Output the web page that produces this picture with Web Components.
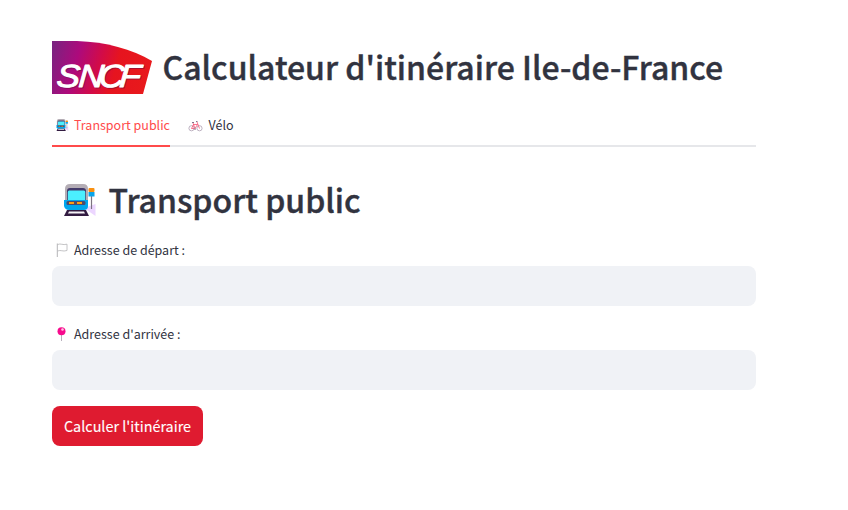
<!DOCTYPE html>
<html lang="fr">
<head>
<meta charset="utf-8">
<title>Calculateur d'itinéraire</title>
<style>
body{margin:0;background:#fff;color:#31333f;font-family:"Noto Sans CJK SC","Noto Sans",sans-serif}
</style>
</head>
<body>
<route-app></route-app>
<script>
const define=(name,html,setup)=>customElements.define(name,class extends HTMLElement{
  connectedCallback(){
    if(this.shadowRoot)return;
    const t=document.createElement('template');
    t.innerHTML=html;
    this.attachShadow({mode:'open'}).append(t.content.cloneNode(true));
    if(setup)setup(this,this.shadowRoot);
  }
});

define('sncf-logo',`
<style>:host{display:block;width:100px;height:53px}svg{display:block}
text{font:italic 400 32px "Liberation Sans",Arial,sans-serif;stroke-width:1px;stroke-linejoin:round}</style>
<svg width="100" height="53" viewBox="0 0 100 53">
<defs><linearGradient id="g" x1="0" y1="0.15" x2="1" y2="0.3"><stop offset="0" stop-color="#7b2280"/><stop offset=".27" stop-color="#ad0a7c"/><stop offset=".5" stop-color="#d20b48"/><stop offset=".68" stop-color="#e6141f"/><stop offset="1" stop-color="#e8191c"/></linearGradient></defs>
<path d="M0 0H25C54 1 80 8 100 20L91 53H0Z" fill="url(#g)"/>
<text transform="translate(4.700 46.500) skewX(-4) scale(1.100 1)" x="0 20 38.500 57" fill="#650d43" stroke="#650d43" opacity=".5" aria-hidden="true">SNCF</text>
<text transform="translate(4 45.500) skewX(-4) scale(1.100 1)" x="0 20 38.500 57" fill="#fff" stroke="#fff">SNCF</text>
</svg>`);

const icons={
train:`<svg viewBox="0 0 32 32">
<path d="M31.500 20V32L20 24Z" fill="#ecd6ff"/>
<path d="M1 5Q1 0 6 0H19Q24 0 24 5V17H1Z" fill="#b4adb5"/>
<path d="M3 7Q3 4 6 4H19Q22 4 22 7V17H3Z" fill="#433b6b"/><rect x="3.800" y="6.500" width="17.500" height="10.500" rx="1.500" fill="#4befff"/>
<path d="M0 16H24V22Q24 26 20 26H5Q1 26 0 22Z" fill="#00a6ed"/>
<rect x="2.500" y="17" width="19" height="4" rx="1.500" fill="#4b4b70"/><path d="M5 18h5v2H5zM13 18h5v2h-5z" fill="#ff9c12"/>
<path d="M3 26H22L25 32H0L2 28Z" fill="#321b41"/><path d="M5 27.500H20L21 29.500H4Z" fill="#f5f3f7"/>
<path d="M27.500 11V25" stroke="#7d7382" stroke-width="1.200"/><rect x="24.500" y="4" width="6" height="4" rx="1" fill="#f99010"/><rect x="24.500" y="8" width="6" height="4.500" fill="#0aa5ea"/></svg>`,
bike:`<svg viewBox="0 0 28 24" fill="none">
<circle cx="6" cy="16.500" r="5.200" stroke="#a999ae" stroke-width="1.500"/><circle cx="22" cy="16.500" r="5.200" stroke="#a999ae" stroke-width="1.500"/>
<path d="M9 6L13 17L6 17L10 9H18L13 17M17 4L22 17" stroke="#f5486b" stroke-width="1.500"/>
<path d="M7 5H11M15 3H18" stroke="#61516d" stroke-width="1.600"/><circle cx="13" cy="18" r="2" fill="#ae92a8"/></svg>`,
flag:`<svg viewBox="0 0 14 14" fill="none" stroke="#b5b5b7"><path d="M2.300 .5V14" stroke-width="1"/><path d="M2.500 1.500C6 0 7.500 2.500 12 1.200V7.500C7.500 9 6 6.500 2.500 8" stroke-width=".8"/></svg>`,
pin:`<svg viewBox="0 0 14 14"><path d="M6.500 7V14" stroke="#b9b0bd" stroke-width="1"/><circle cx="6.500" cy="4.200" r="4" fill="#f70a8d"/><circle cx="7.500" cy="2.500" r="1.300" fill="#ffc5e3"/></svg>`
};
define('route-icon',`<style>:host{display:block;flex:none}svg{display:block;width:100%;height:100%}</style>`,
(el,root)=>root.append(document.createRange().createContextualFragment(icons[el.getAttribute('name')])));

define('page-title',`
<style>:host{display:flex;align-items:center}
h1{margin:0;font-size:32px;line-height:43px;font-weight:500;white-space:nowrap;-webkit-text-stroke:.4px currentColor}</style>
<slot name="icon"></slot><h1><slot></slot></h1>`);

define('nav-tab',`
<style>:host{display:flex;align-items:center;height:40px;font-size:12.500px;line-height:20px;border-bottom:2px solid transparent;box-sizing:border-box;gap:5px;padding:0 0 2px 4px;white-space:nowrap}
:host([active]){color:#ff4b4b;border-color:#ff4b4b}</style>
<slot name="icon"></slot><span><slot></slot></span>`);

define('tab-list',`
<style>:host{display:flex;gap:14.500px;height:40px;box-shadow:inset 0 -2px #e6e7ea}</style><slot></slot>`);

define('text-field',`
<style>:host{display:block}
.label{display:flex;align-items:center;height:24px;font-size:12.500px;line-height:20px;gap:5px;padding-left:3px;margin-bottom:4px}
input{display:block;width:100%;height:40px;box-sizing:border-box;border:0;border-radius:8px;background:#f0f2f6;padding:0 12px;font:inherit;outline:0}</style>
<label><span class="label"><slot name="icon"></slot><span><slot></slot></span></span><input type="text"></label>`);

define('action-button',`
<style>:host{display:block;width:151px}
button{display:block;width:100%;height:40px;border:0;border-radius:8px;background:#df1b30;color:#fff;font:inherit;font-size:14.400px;line-height:40px;padding:0;white-space:nowrap;-webkit-text-stroke:.1px #fff}</style>
<button type="button"><span><slot></slot></span></button>`);

define('route-app',`
<style>
:host{display:block;width:704px;padding:41px 0 0 52px}
header{display:flex;height:53px;gap:10.500px}
header page-title{height:51px}
tab-list{margin-top:13px}
.section{margin-top:31px;height:43px}
.section route-icon{width:32px;height:32px;margin:0 13px 0 11.500px}
nav-tab route-icon{width:13px;height:12px}
nav-tab.bike route-icon{width:15px;height:12px;margin-top:2px}
text-field route-icon{width:14px;height:14px}
.departure{margin-top:17px}.arrival{margin-top:16px}
action-button{margin-top:16px}
</style>
<header><sncf-logo></sncf-logo><page-title>Calculateur d'itinéraire Ile-de-France</page-title></header>
<tab-list><nav-tab active><route-icon slot="icon" name="train"></route-icon>Transport public</nav-tab><nav-tab class="bike"><route-icon slot="icon" name="bike"></route-icon>Vélo</nav-tab></tab-list>
<page-title class="section"><route-icon slot="icon" name="train"></route-icon>Transport public</page-title>
<text-field class="departure"><route-icon slot="icon" name="flag"></route-icon>Adresse de départ :</text-field>
<text-field class="arrival"><route-icon slot="icon" name="pin"></route-icon>Adresse d'arrivée :</text-field>
<action-button>Calculer l'itinéraire</action-button>`);
</script>
</body>
</html>
